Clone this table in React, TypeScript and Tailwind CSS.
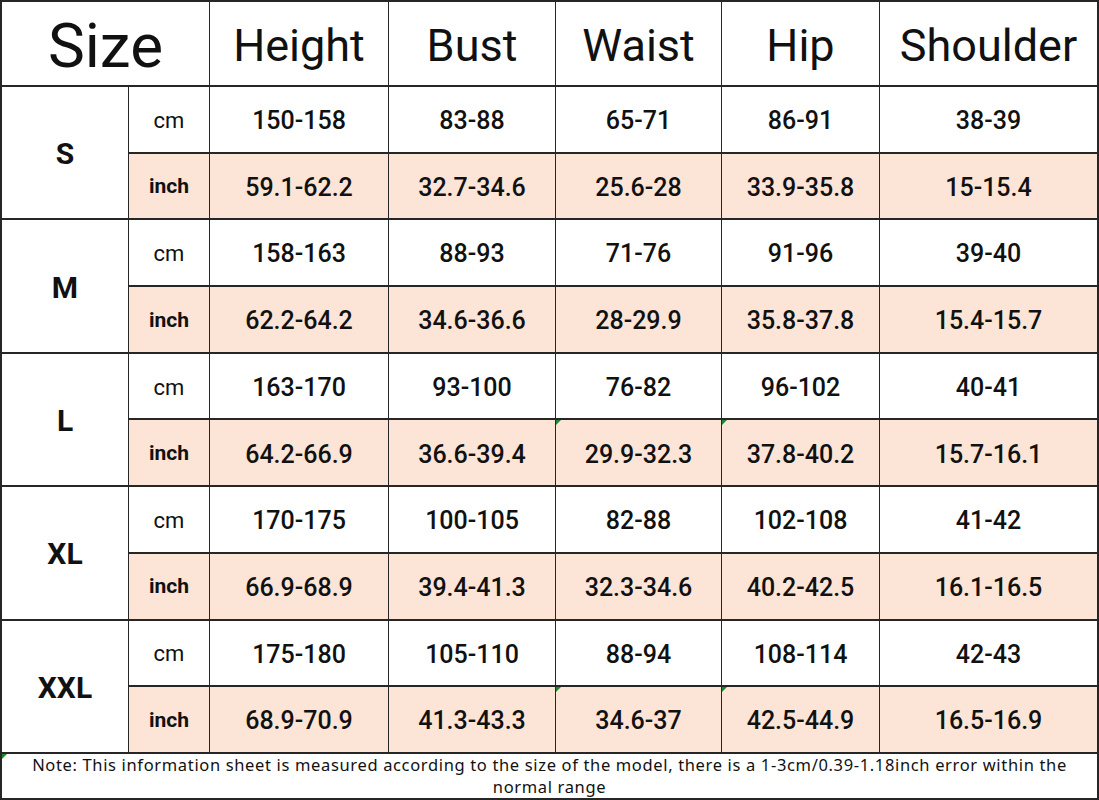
import React from "react";

interface SizeRow {
  size: string;
  cm: string[];
  inch: string[];
  marks?: number[];
}

const headers = ["Height", "Bust", "Waist", "Hip", "Shoulder"];

const rows: SizeRow[] = [
  { size: "S", cm: ["150-158", "83-88", "65-71", "86-91", "38-39"], inch: ["59.1-62.2", "32.7-34.6", "25.6-28", "33.9-35.8", "15-15.4"] },
  { size: "M", cm: ["158-163", "88-93", "71-76", "91-96", "39-40"], inch: ["62.2-64.2", "34.6-36.6", "28-29.9", "35.8-37.8", "15.4-15.7"] },
  { size: "L", cm: ["163-170", "93-100", "76-82", "96-102", "40-41"], inch: ["64.2-66.9", "36.6-39.4", "29.9-32.3", "37.8-40.2", "15.7-16.1"], marks: [2, 3] },
  { size: "XL", cm: ["170-175", "100-105", "82-88", "102-108", "41-42"], inch: ["66.9-68.9", "39.4-41.3", "32.3-34.6", "40.2-42.5", "16.1-16.5"] },
  { size: "XXL", cm: ["175-180", "105-110", "88-94", "108-114", "42-43"], inch: ["68.9-70.9", "41.3-43.3", "34.6-37", "42.5-44.9", "16.5-16.9"], marks: [2, 3] },
];

// little green error-corner like in Excel
function Mark() {
  return (
    <span className="absolute left-0 top-0 w-0 h-0 border-t-[5px] border-r-[5px] border-t-[#1e8a2e] border-r-transparent" />
  );
}

export default function App() {
  return (
    <div className="w-[1099px] h-[800px] bg-white" style={{ fontFamily: "Roboto, 'Noto Sans', sans-serif" }}>
      <div className="grid h-[800px] w-[1099px] p-[2px] gap-x-px gap-y-[2px] bg-[#262626] text-[#111] grid-cols-[126px_80px_178px_166px_165px_157px_217px] grid-rows-[83px_repeat(10,1fr)_44px]">
        <div className="col-span-2 bg-white flex items-center justify-center text-[62px] leading-none pt-1">
          Size
        </div>
        {headers.map((h) => (
          <div key={h} className="bg-white flex items-center justify-center text-[45px] leading-none pt-1">
            {h}
          </div>
        ))}

        {rows.map((r) => (
          <React.Fragment key={r.size}>
            <div className="row-span-2 bg-white flex items-center justify-center text-[30px] font-bold pt-[2px]">
              {r.size}
            </div>
            <div className="bg-white flex items-center justify-center text-[22px] pt-[2px]">cm</div>
            {r.cm.map((v, i) => (
              <div key={"c" + i} className="bg-white flex items-center justify-center text-[25px] font-medium pt-[3px]">
                {v}
              </div>
            ))}
            <div className="bg-[#fce4d6] flex items-center justify-center text-[21px] font-bold pt-[2px]">inch</div>
            {r.inch.map((v, i) => (
              <div key={"i" + i} className="relative bg-[#fce4d6] flex items-center justify-center text-[25px] font-medium pt-[3px]">
                {r.marks?.includes(i) && <Mark />}
                {v}
              </div>
            ))}
          </React.Fragment>
        ))}

        <div
          className="relative col-span-7 bg-white text-center text-[16.5px] tracking-[0.65px] leading-[22px] px-5 overflow-hidden"
          style={{ fontFamily: "'Noto Sans', sans-serif" }}
        >
          <Mark />
          Note: This information sheet is measured according to the size of the model, there is a 1-3cm/0.39-1.18inch error within the normal range
        </div>
      </div>
    </div>
  );
}
